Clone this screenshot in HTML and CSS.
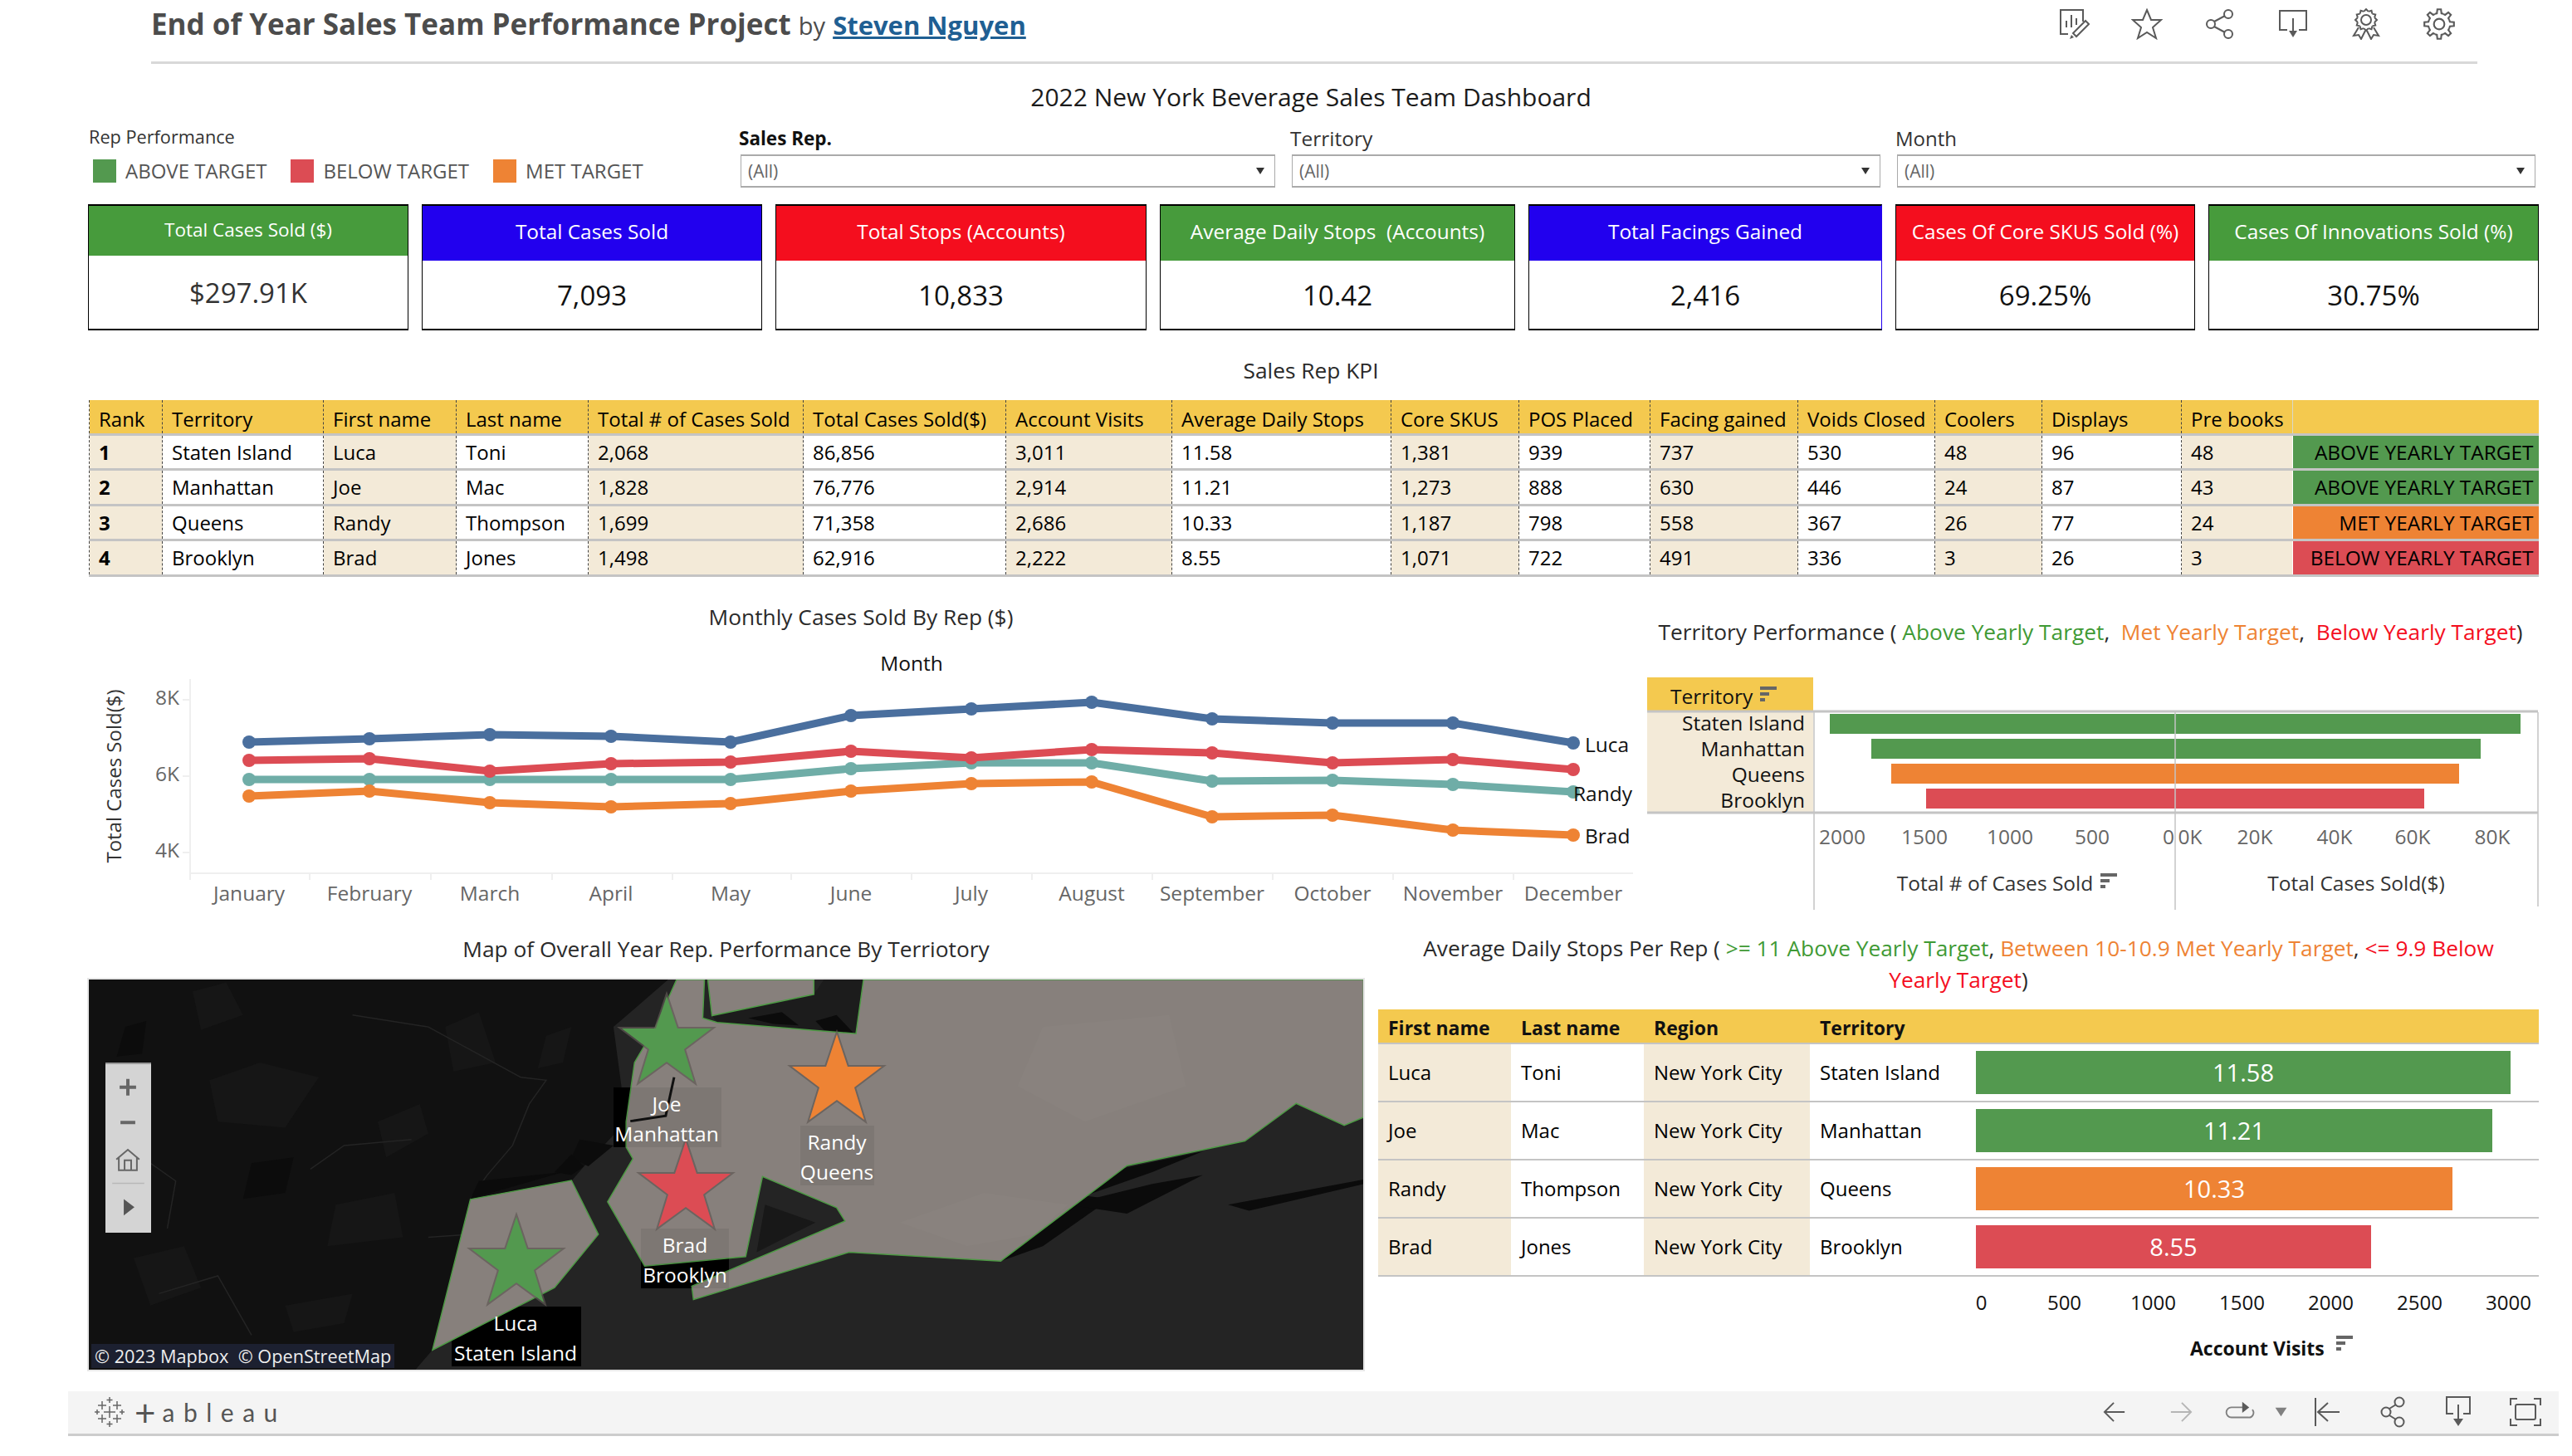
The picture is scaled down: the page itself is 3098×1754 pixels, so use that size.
FILE: index.html
```html
<!DOCTYPE html>
<html lang="en">
<head>
  <meta charset="UTF-8">
  <title>End of Year Sales Team Performance Project</title>
  <link rel="stylesheet" href="styles.css">
</head>
<body>
  <header class="topbar">
    <h1 class="project-title">End of Year Sales Team Performance Project <span class="by">by</span> <a class="author" href="#">Steven Nguyen</a></h1>
    <div class="top-icons">
      <svg class="icon" viewBox="0 0 38 38"><path d="M12 31H3V2h27v14M10 15v8M16 8v15M22 12v8"/><path d="M33 15l4 4-15 15-4-4z"/><path class="solid" d="M14 37l2-5 3 3z"/></svg>
      <svg class="icon" viewBox="0 0 38 38"><path d="M19 2l5 12h12l-10 9 4 13-11-7-11 7 4-13-10-9h12z"/></svg>
      <svg class="icon" viewBox="0 0 38 38"><circle cx="8" cy="19" r="5"/><circle cx="29" cy="7" r="5"/><circle cx="29" cy="31" r="5"/><path d="M12 16l13-7M12 22l13 7"/></svg>
      <svg class="icon" viewBox="0 0 38 38"><path d="M12 26H3V3h32v23h-9M19 12v16"/><path class="solid" d="M14 27h10l-5 8z"/></svg>
      <svg class="icon" viewBox="0 0 38 38"><circle cx="19" cy="14" r="6"/><path id="bump" d="M16.300 3.900L19 1L21.700 3.900"/><use href="#bump" transform="rotate(30 19 14)"/><use href="#bump" transform="rotate(60 19 14)"/><use href="#bump" transform="rotate(90 19 14)"/><use href="#bump" transform="rotate(120 19 14)"/><use href="#bump" transform="rotate(150 19 14)"/><use href="#bump" transform="rotate(180 19 14)"/><use href="#bump" transform="rotate(210 19 14)"/><use href="#bump" transform="rotate(240 19 14)"/><use href="#bump" transform="rotate(270 19 14)"/><use href="#bump" transform="rotate(300 19 14)"/><use href="#bump" transform="rotate(330 19 14)"/><path d="M10 23L4 33l6-1 3 5 5-10M28 23l6 10-6-1-3 5-5-10"/></svg>
      <svg class="icon" viewBox="0 0 36 36"><circle cx="18" cy="18" r="6"/><g id="gear"><path id="tooth" d="M13.22 6.45L15.4 5.77L15.93 1.13H20.07L20.6 5.77L22.78 6.45"/><use href="#tooth" transform="rotate(45 18 18)"/><use href="#tooth" transform="rotate(90 18 18)"/><use href="#tooth" transform="rotate(135 18 18)"/><use href="#tooth" transform="rotate(180 18 18)"/><use href="#tooth" transform="rotate(225 18 18)"/><use href="#tooth" transform="rotate(270 18 18)"/><use href="#tooth" transform="rotate(315 18 18)"/></g></svg>
    </div>
  </header>

  <h2 class="dash-title">2022 New York Beverage Sales Team Dashboard</h2>

  <section class="filters">
    <div class="legend">
      <div class="legend-title">Rep Performance</div>
      <div class="legend-items">
        <span class="swatch green"></span><span class="legend-text">ABOVE TARGET</span>
        <span class="swatch red"></span><span class="legend-text">BELOW TARGET</span>
        <span class="swatch orange"></span><span class="legend-text">MET TARGET</span>
      </div>
    </div>
    <div class="filter">
      <label class="filter-label strong">Sales Rep.</label>
      <div class="select">(All)<span class="caret"></span></div>
    </div>
    <div class="filter">
      <label class="filter-label medium">Territory</label>
      <div class="select">(All)<span class="caret"></span></div>
    </div>
    <div class="filter">
      <label class="filter-label">Month</label>
      <div class="select">(All)<span class="caret"></span></div>
    </div>
  </section>

  <section class="kpis">
    <div class="kpi"><div class="kpi-head short k-green">Total Cases Sold ($)</div><div class="kpi-val soft">$297.91K</div></div>
    <div class="kpi"><div class="kpi-head k-blue">Total Cases Sold</div><div class="kpi-val">7,093</div></div>
    <div class="kpi"><div class="kpi-head k-red">Total Stops (Accounts)</div><div class="kpi-val">10,833</div></div>
    <div class="kpi"><div class="kpi-head k-green">Average Daily Stops&nbsp; (Accounts)</div><div class="kpi-val">10.42</div></div>
    <div class="kpi kpi-edge"><div class="kpi-head k-blue">Total Facings Gained</div><div class="kpi-val">2,416</div></div>
    <div class="kpi"><div class="kpi-head k-red">Cases Of Core SKUS Sold (%)</div><div class="kpi-val">69.25%</div></div>
    <div class="kpi"><div class="kpi-head k-green">Cases Of Innovations Sold (%)</div><div class="kpi-val">30.75%</div></div>
  </section>

  <div class="section-title kpi-title">Sales Rep KPI</div>

  <table class="rep-table">
    <colgroup>
      <col class="c88"><col class="c194"><col class="c160"><col class="c159"><col class="c259"><col class="c244"><col class="c200"><col class="c264"><col class="c154"><col class="c158"><col class="c178"><col class="c165"><col class="c129"><col class="c168"><col class="c134"><col class="c296">
    </colgroup>
    <thead>
      <tr><th>Rank</th><th>Territory</th><th>First name</th><th>Last name</th><th>Total # of Cases Sold</th><th>Total Cases Sold($)</th><th>Account Visits</th><th>Average Daily Stops</th><th>Core SKUS</th><th>POS Placed</th><th>Facing gained</th><th>Voids Closed</th><th>Coolers</th><th>Displays</th><th>Pre books</th><th></th></tr>
    </thead>
    <tbody>
      <tr><td class="rank">1</td><td>Staten Island</td><td>Luca</td><td>Toni</td><td>2,068</td><td>86,856</td><td>3,011</td><td>11.58</td><td>1,381</td><td>939</td><td>737</td><td>530</td><td>48</td><td>96</td><td>48</td><td class="status st-green">ABOVE YEARLY TARGET</td></tr>
      <tr><td class="rank">2</td><td>Manhattan</td><td>Joe</td><td>Mac</td><td>1,828</td><td>76,776</td><td>2,914</td><td>11.21</td><td>1,273</td><td>888</td><td>630</td><td>446</td><td>24</td><td>87</td><td>43</td><td class="status st-green">ABOVE YEARLY TARGET</td></tr>
      <tr><td class="rank">3</td><td>Queens</td><td>Randy</td><td>Thompson</td><td>1,699</td><td>71,358</td><td>2,686</td><td>10.33</td><td>1,187</td><td>798</td><td>558</td><td>367</td><td>26</td><td>77</td><td>24</td><td class="status st-orange">MET YEARLY TARGET</td></tr>
      <tr><td class="rank">4</td><td>Brooklyn</td><td>Brad</td><td>Jones</td><td>1,498</td><td>62,916</td><td>2,222</td><td>8.55</td><td>1,071</td><td>722</td><td>491</td><td>336</td><td>3</td><td>26</td><td>3</td><td class="status st-red">BELOW YEARLY TARGET</td></tr>
    </tbody>
  </table>

  <section class="middle">
    <div class="line-panel">
      <div class="section-title">Monthly Cases Sold By Rep ($)</div>
      <svg class="line-chart" viewBox="107 780 1860 345">
        <text class="t-dark" x="1098" y="808" text-anchor="middle">Month</text>
        <path class="axis-line" d="M229 818V1060M229 1052H1968M373 1052v8M519 1052v8M665 1052v8M810 1052v8M953 1052v8M1098 1052v8M1243 1052v8M1388 1052v8M1533 1052v8M1678 1052v8M1823 1052v8M220 843h9M220 935h9M220 1027h9"/>
        <text class="t-axis" x="216" y="849" text-anchor="end">8K</text>
        <text class="t-axis" x="216" y="941" text-anchor="end">6K</text>
        <text class="t-axis" x="216" y="1033" text-anchor="end">4K</text>
        <text class="t-ytitle" transform="translate(146 935) rotate(-90)" text-anchor="middle">Total Cases Sold($)</text>

        <g class="series s-blue">
          <polyline points="300,894 445,890 590,885 736,887 880,894 1025,862 1170,854 1315,846 1460,866 1605,871 1750,871 1895,895"/>
          <circle cx="300" cy="894" r="8"/><circle cx="445" cy="890" r="8"/><circle cx="590" cy="885" r="8"/><circle cx="736" cy="887" r="8"/><circle cx="880" cy="894" r="8"/><circle cx="1025" cy="862" r="8"/><circle cx="1170" cy="854" r="8"/><circle cx="1315" cy="846" r="8"/><circle cx="1460" cy="866" r="8"/><circle cx="1605" cy="871" r="8"/><circle cx="1750" cy="871" r="8"/><circle cx="1895" cy="895" r="8"/>
        </g>
        <g class="series s-teal">
          <polyline points="300,939 445,939 590,939 736,939 880,939 1025,926 1170,919 1315,919 1460,941 1605,940 1750,945 1895,954"/>
          <circle cx="300" cy="939" r="8"/><circle cx="445" cy="939" r="8"/><circle cx="590" cy="939" r="8"/><circle cx="736" cy="939" r="8"/><circle cx="880" cy="939" r="8"/><circle cx="1025" cy="926" r="8"/><circle cx="1170" cy="919" r="8"/><circle cx="1315" cy="919" r="8"/><circle cx="1460" cy="941" r="8"/><circle cx="1605" cy="940" r="8"/><circle cx="1750" cy="945" r="8"/><circle cx="1895" cy="954" r="8"/>
        </g>
        <g class="series s-red">
          <polyline points="300,916 445,914 590,929 736,920 880,918 1025,905 1170,913 1315,903 1460,907 1605,919 1750,915 1895,927"/>
          <circle cx="300" cy="916" r="8"/><circle cx="445" cy="914" r="8"/><circle cx="590" cy="929" r="8"/><circle cx="736" cy="920" r="8"/><circle cx="880" cy="918" r="8"/><circle cx="1025" cy="905" r="8"/><circle cx="1170" cy="913" r="8"/><circle cx="1315" cy="903" r="8"/><circle cx="1460" cy="907" r="8"/><circle cx="1605" cy="919" r="8"/><circle cx="1750" cy="915" r="8"/><circle cx="1895" cy="927" r="8"/>
        </g>
        <g class="series s-orange">
          <polyline points="300,959 445,953 590,967 736,972 880,968 1025,953 1170,944 1315,942 1460,984 1605,982 1750,1000 1895,1006"/>
          <circle cx="300" cy="959" r="8"/><circle cx="445" cy="953" r="8"/><circle cx="590" cy="967" r="8"/><circle cx="736" cy="972" r="8"/><circle cx="880" cy="968" r="8"/><circle cx="1025" cy="953" r="8"/><circle cx="1170" cy="944" r="8"/><circle cx="1315" cy="942" r="8"/><circle cx="1460" cy="984" r="8"/><circle cx="1605" cy="982" r="8"/><circle cx="1750" cy="1000" r="8"/><circle cx="1895" cy="1006" r="8"/>
        </g>

        <text class="t-dark small" x="1909" y="906">Luca</text>
        <text class="t-dark small" x="1895" y="965">Randy</text>
        <text class="t-dark small" x="1909" y="1016">Brad</text>

        <text class="t-axis" x="300" y="1085" text-anchor="middle">January</text>
        <text class="t-axis" x="445" y="1085" text-anchor="middle">February</text>
        <text class="t-axis" x="590" y="1085" text-anchor="middle">March</text>
        <text class="t-axis" x="736" y="1085" text-anchor="middle">April</text>
        <text class="t-axis" x="880" y="1085" text-anchor="middle">May</text>
        <text class="t-axis" x="1025" y="1085" text-anchor="middle">June</text>
        <text class="t-axis" x="1170" y="1085" text-anchor="middle">July</text>
        <text class="t-axis" x="1315" y="1085" text-anchor="middle">August</text>
        <text class="t-axis" x="1460" y="1085" text-anchor="middle">September</text>
        <text class="t-axis" x="1605" y="1085" text-anchor="middle">October</text>
        <text class="t-axis" x="1750" y="1085" text-anchor="middle">November</text>
        <text class="t-axis" x="1895" y="1085" text-anchor="middle">December</text>
      </svg>
    </div>

    <div class="terr-panel">
      <div class="section-title terr-title">Territory Performance ( <span class="c-green">Above Yearly Target</span>,&nbsp; <span class="c-orange">Met Yearly Target</span>,&nbsp; <span class="c-red">Below Yearly Target</span>)</div>
      <svg class="terr-chart" viewBox="1984 790 1080 335">
        <rect class="fill-yellow" x="1984" y="816" width="200" height="40"/>
        <rect class="fill-beige" x="1984" y="858" width="200" height="120"/>
        <text class="t-dark" x="2012" y="848">Territory</text>
        <g class="sort-mark"><rect x="2120" y="827" width="20" height="4"/><rect x="2120" y="834" width="11" height="4"/><rect x="2120" y="841" width="6" height="4"/></g>

        <rect class="bar-green" x="2204" y="860" width="832" height="24"/>
        <rect class="bar-green" x="2254" y="890" width="734" height="24"/>
        <rect class="bar-orange" x="2278" y="920" width="684" height="24"/>
        <rect class="bar-red" x="2320" y="950" width="600" height="24"/>

        <path class="grid-line" d="M1984 857H3057M1984 979H3057"/>
        <path class="grid-thin" d="M2185 858V1096M2620 858V1096M3057 858V1092"/>

        <text class="t-dark right" x="2174" y="880">Staten Island</text>
        <text class="t-dark right" x="2174" y="911">Manhattan</text>
        <text class="t-dark right" x="2174" y="942">Queens</text>
        <text class="t-dark right" x="2174" y="973">Brooklyn</text>

        <text class="t-axis" x="2219" y="1017" text-anchor="middle">2000</text>
        <text class="t-axis" x="2318" y="1017" text-anchor="middle">1500</text>
        <text class="t-axis" x="2421" y="1017" text-anchor="middle">1000</text>
        <text class="t-axis" x="2520" y="1017" text-anchor="middle">500</text>
        <text class="t-axis" x="2612" y="1017" text-anchor="middle">0</text>
        <text class="t-axis" x="2638" y="1017" text-anchor="middle">0K</text>
        <text class="t-axis" x="2716" y="1017" text-anchor="middle">20K</text>
        <text class="t-axis" x="2812" y="1017" text-anchor="middle">40K</text>
        <text class="t-axis" x="2906" y="1017" text-anchor="middle">60K</text>
        <text class="t-axis" x="3002" y="1017" text-anchor="middle">80K</text>

        <text class="t-title" x="2403" y="1073" text-anchor="middle">Total # of Cases Sold</text>
        <g class="sort-mark"><rect x="2530" y="1052" width="20" height="4"/><rect x="2530" y="1059" width="11" height="4"/><rect x="2530" y="1066" width="6" height="4"/></g>
        <text class="t-title" x="2838" y="1073" text-anchor="middle">Total Cases Sold($)</text>
      </svg>
    </div>
  </section>

  <section class="bottom">
    <div class="map-panel">
      <div class="section-title map-title">Map of Overall Year Rep. Performance By Terriotory</div>
      <div class="map">
        <svg class="map-svg" viewBox="107 1180 1535 470">
          <rect class="water" x="107" y="1180" width="1535" height="470"/>
          <g transform="translate(90 1130) scale(1.014 .357)">
            <polygon class="land" points="17,140 705,140 640,300 655,620 605,770 590,820 470,880 425,1390 405,1456 17,1456"/>
            <polygon class="land-light" points="160,480 220,420 290,470 250,640 170,620"/>
            <polygon class="land-light" points="440,300 480,250 500,420 450,450"/>
            <polygon class="land-light" points="310,900 380,860 390,1010 300,1040"/>
            <polygon class="land-light" points="140,180 180,150 200,260 150,310"/>
            <polygon class="land-light" points="360,620 410,560 420,660 370,740"/>
            <polygon class="land-light" points="70,1080 130,1040 150,1180 90,1240"/>
            <polygon class="land-light" points="560,330 590,300 580,420 550,440"/>
            <polygon class="land-light" points="250,1240 330,1200 320,1300 260,1330"/>
            <polygon class="land-dark" points="60,300 85,280 80,390 50,400"/>
            <polygon class="land-dark" points="210,760 260,740 250,860 200,880"/>
            <polygon class="land-dark" points="600,680 640,700 610,770 590,740"/>
            <path class="river" d="M420,1010 L470,1000 M530,470 L560,480 L540,560 L520,700 L490,800 L470,880 M100,1200 L170,1140 L210,1340 M330,260 L420,300 L530,470 M280,780 L320,700 L400,680 M60,700 L120,820 L110,980"/>
            <polygon class="water-dark" points="878,190 890,140 937,140 928,323 763,285 757,262"/>
            <polygon class="speck" points="800,270 840,250 860,295 830,290"/>
            <polygon class="speck" points="880,280 905,260 925,320 890,310"/>
            <polygon class="speck" points="1240,780 1340,720 1280,790 1200,870"/>
            <polygon class="speck" points="1100,1090 1200,870 1230,880 1150,1040"/>
            <polygon class="speck" points="1180,900 1280,830 1340,800 1250,930"/>
            <polygon class="speck" points="1370,900 1531,815 1531,830 1395,920"/>
            <polygon class="speck-soft" points="820,900 880,960 810,1060"/>
            <polygon class="speck" points="480,820 580,790 470,880"/>
            <polygon class="speck" points="590,730 605,770 590,800 570,790"/>
          </g>

          <rect class="label-back" x="739" y="1310" width="130" height="72"/>
          <rect class="label-back" x="772" y="1480" width="106" height="72"/>
          <rect class="label-back" x="544" y="1574" width="156" height="72"/>

          <g transform="translate(90 1130) scale(1.014 .357)">
            <polygon class="land-gray" points="715,140 748,140 746,270 763,285 928,323 937,140 1531,140 1531,605 1508,632 1451,558 1390,685 1250,768 1100,1090 920,1060 735,1220 733,1175 915,955 905,910 817,805 797,1075 677,1107 633,890 663,745 655,705 655,620 665,420 690,300"/>
            <polygon class="land-gray" points="752,140 878,140 878,190 757,262"/>
            <polygon class="land-gray" points="470,882 590,818 622,1000 570,1180 425,1390"/>
            <polygon class="gray-light" points="1080,860 1180,900 1140,1000 1060,1040 980,960"/>
            <polygon class="gray-light" points="1150,300 1300,260 1320,500 1200,620 1120,500"/>
            <path class="river-black" d="M712,470 L702,600 L660,618"/>
          </g>

          <rect class="label-shade" x="739" y="1310" width="130" height="72"/>
          <rect class="label-shade" x="964" y="1356" width="89" height="72"/>
          <rect class="label-shade" x="772" y="1480" width="106" height="72"/>

          <polygon class="star bar-green" transform="translate(803 1257)" points="0,-57 13,-18 54,-18 21,7 33,46 0,22 -33,46 -21,7 -54,-18 -13,-18"/>
          <polygon class="star bar-orange" transform="translate(1008 1303)" points="0,-57 13,-18 54,-18 21,7 33,46 0,22 -33,46 -21,7 -54,-18 -13,-18"/>
          <polygon class="star bar-red" transform="translate(826 1432)" points="0,-57 13,-18 54,-18 21,7 33,46 0,22 -33,46 -21,7 -54,-18 -13,-18"/>
          <polygon class="star bar-green" transform="translate(622 1523)" points="0,-57 13,-18 54,-18 21,7 33,46 0,22 -33,46 -21,7 -54,-18 -13,-18"/>

          <text class="map-text" x="803" y="1339">Joe</text>
          <text class="map-text" x="803" y="1375">Manhattan</text>
          <text class="map-text" x="1008" y="1385">Randy</text>
          <text class="map-text" x="1008" y="1421">Queens</text>
          <text class="map-text" x="825" y="1509">Brad</text>
          <text class="map-text" x="825" y="1545">Brooklyn</text>
          <text class="map-text" x="621" y="1603">Luca</text>
          <text class="map-text" x="621" y="1639">Staten Island</text>
        </svg>

        <div class="map-tools">
          <svg viewBox="0 2 55 205">
            <path class="tool-bold" d="M27 20v20M17 30h20M18 73h18"/>
            <path class="tool-thin" d="M13 118l14-12 14 12M16 115v16h22v-16M23 131v-12h8v12"/>
            <path class="tool-rule" d="M8 147h39"/>
            <path class="tool-fill" d="M22 166l13 10-13 10z"/>
          </svg>
        </div>
        <div class="map-credit">© 2023 Mapbox&nbsp; © OpenStreetMap</div>
      </div>
    </div>

    <div class="stops-panel">
      <div class="section-title stops-title">Average Daily Stops Per Rep ( <span class="c-green">&gt;= 11 Above Yearly Target</span>, <span class="c-orange">Between 10-10.9 Met Yearly Target</span>, <span class="c-red">&lt;= 9.9 Below<br>Yearly Target</span>)</div>
      <div class="stops-head">
        <div>First name</div><div>Last name</div><div>Region</div><div>Territory</div><div></div>
      </div>
      <div class="stops-row">
        <div class="beige">Luca</div><div>Toni</div><div class="beige">New York City</div><div>Staten Island</div>
        <div class="bar-cell"><div class="stop-bar st-bar-green" style="width: 644px">11.58</div></div>
      </div>
      <div class="stops-row">
        <div class="beige">Joe</div><div>Mac</div><div class="beige">New York City</div><div>Manhattan</div>
        <div class="bar-cell"><div class="stop-bar st-bar-green" style="width: 622px">11.21</div></div>
      </div>
      <div class="stops-row">
        <div class="beige">Randy</div><div>Thompson</div><div class="beige">New York City</div><div>Queens</div>
        <div class="bar-cell"><div class="stop-bar st-bar-orange" style="width: 574px">10.33</div></div>
      </div>
      <div class="stops-row">
        <div class="beige">Brad</div><div>Jones</div><div class="beige">New York City</div><div>Brooklyn</div>
        <div class="bar-cell"><div class="stop-bar st-bar-red" style="width: 476px">8.55</div></div>
      </div>
      <div class="stops-axis">
        <span class="zero">0</span><span>500</span><span>1000</span><span>1500</span><span>2000</span><span>2500</span><span>3000</span>
      </div>
      <div class="stops-axis-title">Account Visits
        <svg class="sort-small" viewBox="0 0 20 20"><rect width="20" height="4"/><rect y="7" width="11" height="4"/><rect y="14" width="6" height="4"/></svg>
      </div>
    </div>
  </section>

  <footer class="footbar">
    <div class="brand">
      <svg class="brand-mark" viewBox="0 0 36 36">
        <path d="M18 11v14M11 18h14M9 5v10M4 10h10M27 5v10M22 10h10M9 21v10M4 26h10M27 21v10M22 26h10M18 0v7M14.5 3.500h7M18 29v7M14.500 32.500h7M3 15v6M0 18h6M33 15v6M30 18h6"/>
      </svg>
      <span class="brand-plus">+</span><span class="brand-word">ableau</span>
    </div>
    <div class="foot-icons">
      <svg class="fi fi-back" viewBox="0 0 30 30"><path d="M28 15H3M14 3L2 15l12 12"/></svg>
      <svg class="fi fi-off" viewBox="0 0 30 30"><path d="M2 15h25M16 3l12 12-12 12"/></svg>
      <svg class="fi fi-redo" viewBox="0 0 38 30"><path d="M23 9H8a6 6 0 0 0 0 13h22a6 6 0 0 0 5-10"/><path class="solid" d="M22 2l9 7-9 7z"/></svg>
      <svg class="fi fi-drop" viewBox="0 0 16 14"><path class="solid" d="M0 1h16l-8 12z"/></svg>
      <svg class="fi fi-first" viewBox="0 0 32 36"><path d="M2 1v34M31 18H6M17 7L5 18l12 11"/></svg>
      <svg class="fi fi-share" viewBox="0 0 30 38"><circle cx="7" cy="19" r="5.500"/><circle cx="23" cy="7" r="5.500"/><circle cx="23" cy="31" r="5.500"/><path d="M11 15l8-5M11 23l8 5"/></svg>
      <svg class="fi fi-down" viewBox="0 0 32 38"><path d="M10 21H2V1h28v20h-8M16 10v18"/><path class="solid" d="M10 27h12l-6 9z"/></svg>
      <svg class="fi fi-full" viewBox="0 0 38 34"><path d="M1 9V1h8M29 1h8v8M37 25v8h-8M9 33H1v-8"/><rect x="7" y="8" width="24" height="18" rx="2"/></svg>
    </div>
  </footer>
</body>
</html>
```

FILE: styles.css
```css
* {
  box-sizing: border-box;
}
html, body {
  margin: 0;
  padding: 0;
}
body {
  width: 3098px;
  height: 1754px;
  overflow: hidden;
  background: #fff;
  font-family: "Open Sans", Lato, sans-serif;
  color: #222;
  font-size: 24px;
}

/* top bar */
.topbar {
  display: flex;
  justify-content: space-between;
  align-items: center;
  height: 77px;
  margin-left: 182px;
  width: 2802px;
  padding-bottom: 17px;
  border-bottom: 3px solid #d8d8d8;
}
.project-title {
  margin: 0;
  font-size: 35px;
  font-weight: 700;
  color: #4c4c4c;
  white-space: nowrap;
}
.by {
  font-size: 29px;
  font-weight: 400;
}
.author {
  color: #1f5f93;
  font-size: 31px;
}
.top-icons {
  display: flex;
  gap: 50px;
  margin-right: 27px;
}
.icon {
  width: 38px;
  height: 38px;
  fill: none;
  stroke: #5a5a5a;
  stroke-width: 2;
}
.solid {
  fill: #5a5a5a;
  stroke: none;
}

.dash-title {
  margin: 0;
  height: 79px;
  line-height: 79px;
  text-align: center;
  font-size: 30px;
  font-weight: 500;
  color: #1b1b1b;
  padding-left: 60px;
}

/* filters and legend */
.filters {
  display: grid;
  grid-template-columns: 765px 644px 709px 769px;
  column-gap: 20px;
  padding-left: 107px;
  height: 70px;
}
.legend-title {
  font-size: 21.700px;
  height: 33px;
  line-height: 18px;
  color: #333;
}
.legend-items {
  display: flex;
  align-items: center;
  margin-left: 5px;
}
.swatch {
  width: 28px;
  height: 28px;
  margin-right: 11px;
}
.swatch.green { background: #53994f; }
.swatch.red { background: #dc4c54; }
.swatch.orange { background: #ee8334; }
.legend-text {
  font-size: 24px;
  color: #555;
  margin-right: 29px;
  white-space: nowrap;
}
.filter-label {
  display: block;
  height: 30px;
  line-height: 22px;
  margin-left: -2px;
  font-size: 24px;
  color: #333;
}
.filter-label.strong {
  font-size: 22.500px;
  font-weight: 700;
  color: #111;
}
.filter-label.medium {
  font-size: 24.500px;
  font-weight: 500;
}
.select {
  display: flex;
  justify-content: space-between;
  align-items: center;
  height: 40px;
  padding: 0 12px 0 8px;
  border: 1px solid #aaa;
  border-top-width: 2px;
  border-bottom-width: 2px;
  font-size: 21px;
  color: #666;
}
.caret {
  width: 0;
  height: 0;
  border-left: 5px solid transparent;
  border-right: 5px solid transparent;
  border-top: 8px solid #333;
}

/* kpi cards */
.kpis {
  display: grid;
  grid-template-columns: 386px 410px 447px 428px 426px 361px 398px;
  gap: 16px;
  margin: 20px 0 0 106px;
  width: 2952px;
}
.kpi {
  height: 152px;
  display: flex;
  flex-direction: column;
  border: 1px solid #000;
  border-top-width: 2px;
  border-bottom-width: 2px;
}
.kpi-edge {
  border-right-color: #2200ee;
}
.kpi-head {
  height: 66px;
  display: flex;
  align-items: center;
  justify-content: center;
  padding-bottom: 6px;
  color: #fff;
  font-size: 24.400px;
  font-weight: 500;
  white-space: nowrap;
}
.kpi-head.short {
  height: 60px;
  padding-bottom: 4px;
  font-size: 22.500px;
}
.k-green { background: #479b3c; }
.k-blue { background: #2200ee; }
.k-red { background: #f40e1e; }
.kpi-val {
  flex: 1;
  display: flex;
  align-items: center;
  justify-content: center;
  font-size: 33px;
  font-weight: 500;
  color: #111;
}
.kpi-val.soft {
  color: #333;
}

.section-title {
  text-align: center;
  font-size: 26.300px;
  line-height: 40px;
  color: #2a2a2a;
  white-space: nowrap;
}
.kpi-title {
  height: 84px;
  padding: 28px 0 0 60px;
}

/* rep table */
.rep-table {
  table-layout: fixed;
  width: 2950px;
  margin-left: 107px;
  border-collapse: collapse;
  font-size: 24px;
  color: #000;
}
.c88 { width: 88px; }
.c194 { width: 194px; }
.c160 { width: 160px; }
.c159 { width: 159px; }
.c259 { width: 259px; }
.c244 { width: 244px; }
.c200 { width: 200px; }
.c264 { width: 264px; }
.c154 { width: 154px; }
.c158 { width: 158px; }
.c178 { width: 178px; }
.c165 { width: 165px; }
.c129 { width: 129px; }
.c168 { width: 168px; }
.c134 { width: 134px; }
.c296 { width: 296px; }
.rep-table th {
  height: 41px;
  padding: 6px 0 0 11px;
  background: #f4c94f;
  font-weight: 400;
  text-align: left;
  white-space: nowrap;
  border-left: 1px dashed #444;
  border-bottom: 3px solid #c4c4c4;
}
.rep-table th:last-child {
  border-left: 1px solid #d8d8c8;
}
.rep-table td {
  height: 42.500px;
  padding: 0 0 0 11px;
  border-left: 1px dashed #444;
  border-bottom: 3px solid #c4c4c4;
  white-space: nowrap;
}
.rep-table td:nth-child(odd) {
  background: #f3ead8;
}
.rep-table .rank {
  font-weight: 700;
}
.rep-table .status {
  text-align: right;
  padding-right: 6px;
  border-left: 1px solid #fff;
  font-size: 24.400px;
}
.st-green { background: #53994f; }
.st-orange { background: #ee8334; }
.st-red { background: #dc4c54; }

/* middle row */
.middle {
  display: grid;
  grid-template-columns: 1860px 1080px;
  column-gap: 17px;
  margin-left: 107px;
  height: 430px;
}
.line-panel .section-title {
  padding-top: 28px;
  height: 85px;
}
.line-chart {
  display: block;
  width: 1860px;
  height: 345px;
}
.terr-title {
  padding: 46px 12px 0 0;
  height: 95px;
}
.terr-chart {
  display: block;
  width: 1080px;
  height: 335px;
}
.line-chart text, .terr-chart text {
  font-size: 24.500px;
}
.axis-line {
  fill: none;
  stroke: #efefef;
  stroke-width: 2;
}
.t-axis { fill: #666; }
.t-dark { fill: #111; }
.t-title { fill: #333; }
.right { text-anchor: end; }
.line-chart .t-ytitle {
  fill: #333;
  font-size: 24px;
}
.series polyline {
  fill: none;
  stroke-width: 9;
  stroke-linejoin: round;
}
.s-blue polyline { stroke: #4a6f9e; }
.s-blue circle { fill: #4a6f9e; }
.s-red polyline { stroke: #dc4c54; }
.s-red circle { fill: #dc4c54; }
.s-teal polyline { stroke: #6fada7; }
.s-teal circle { fill: #6fada7; }
.s-orange polyline { stroke: #ee8334; }
.s-orange circle { fill: #ee8334; }

.fill-yellow { fill: #f4c94f; }
.fill-beige { fill: #f3ead8; }
.bar-green { fill: #53994f; }
.bar-orange { fill: #ee8334; }
.bar-red { fill: #dc4c54; }
.grid-line {
  fill: none;
  stroke: #c4c4c4;
  stroke-width: 3;
}
.grid-thin {
  fill: none;
  stroke: #c4c4c4;
  stroke-width: 1.500;
}
.sort-mark rect { fill: #666; }
.c-green { color: #3f9a35; }
.c-orange { color: #ee8334; }
.c-red { color: #f40e1e; }

/* bottom row */
.bottom {
  display: grid;
  grid-template-columns: 1535px 1398px;
  column-gap: 18px;
  margin-left: 107px;
  height: 551px;
}
.map-title {
  height: 55px;
  line-height: 36px;
}
.map {
  position: relative;
  width: 1535px;
  height: 470px;
  outline: 2px solid #e6e6e6;
}
.map-svg {
  display: block;
  width: 1535px;
  height: 470px;
}
.water { fill: #242424; }
.land { fill: #111; }
.land-light { fill: #161616; }
.land-dark { fill: #0c0c0c; }
.water-dark { fill: #1c1c1c; }
.speck { fill: #0b0b0b; }
.speck-soft { fill: #181818; }
.river {
  fill: none;
  stroke: #242424;
  stroke-width: 1.500;
  vector-effect: non-scaling-stroke;
}
.river-black {
  fill: none;
  stroke: #111;
  stroke-width: 3;
  vector-effect: non-scaling-stroke;
}
.label-back { fill: #000; }
.label-shade { fill: rgba(0, 0, 0, .07); }
.land-gray {
  fill: #87807c;
  stroke: #4e9a45;
  stroke-width: 1.500;
  vector-effect: non-scaling-stroke;
}
.gray-light { fill: #89827e; }
.star {
  stroke: rgba(95, 88, 84, .7);
  stroke-width: 4;
  paint-order: stroke;
}
.map-text {
  fill: #fff;
  font-size: 24.500px;
  text-anchor: middle;
}
.map-tools {
  position: absolute;
  left: 20px;
  top: 100px;
  width: 55px;
  height: 205px;
  background: #d4d4d4;
  border-top: 2px solid #999;
}
.map-tools svg {
  display: block;
  width: 55px;
  height: 203px;
}
.tool-bold {
  fill: none;
  stroke: #666;
  stroke-width: 4;
}
.tool-thin {
  fill: none;
  stroke: #666;
  stroke-width: 2;
}
.tool-rule {
  stroke: #b8b8b8;
  stroke-width: 1.500;
}
.tool-fill { fill: #555; }
.map-credit {
  position: absolute;
  left: 3px;
  bottom: 2px;
  height: 29px;
  padding: 0 4px;
  line-height: 29px;
  font-size: 21.700px;
  color: #eee;
  background: #1c2030;
  white-space: nowrap;
}

.stops-title {
  margin-top: -2px;
  height: 93px;
  line-height: 38px;
}
.stops-head {
  display: grid;
  grid-template-columns: 160px 160px 200px 200px 1fr;
  height: 42px;
  padding-top: 4px;
  background: #f4c94f;
  border-bottom: 2px solid #c4c4c4;
  font-weight: 700;
  font-size: 23px;
  color: #111;
  align-items: center;
}
.stops-head div {
  padding-left: 12px;
}
.stops-row {
  display: grid;
  grid-template-columns: 160px 160px 200px 200px 1fr;
  height: 70px;
  border-bottom: 2px solid #c4c4c4;
  font-size: 24px;
  color: #000;
}
.stops-row > div {
  display: flex;
  align-items: center;
  padding-left: 12px;
}
.stops-row .beige {
  background: #f3ead8;
}
.stops-row .bar-cell {
  padding-left: 0;
}
.stop-bar {
  height: 52px;
  display: flex;
  align-items: center;
  justify-content: center;
  color: #fff;
  font-size: 29px;
  font-weight: 500;
}
.st-bar-green { background: #53994f; }
.st-bar-orange { background: #ee8334; }
.st-bar-red { background: #dc4c54; }
.stops-axis {
  display: flex;
  margin: 14px 0 0 666px;
  height: 32px;
  font-size: 24px;
  color: #111;
}
.stops-axis span {
  flex: 0 0 107px;
  text-align: center;
}
.stops-axis .zero {
  padding-left: 14px;
}
.stops-axis-title {
  display: flex;
  align-items: center;
  gap: 14px;
  margin: 24px 0 0 978px;
  font-size: 23px;
  font-weight: 700;
  color: #111;
}
.sort-small {
  width: 20px;
  height: 20px;
  fill: #666;
  margin-top: -10px;
}

/* footer */
.footbar {
  display: flex;
  justify-content: space-between;
  align-items: center;
  width: 3000px;
  height: 54px;
  margin-left: 82px;
  background: #f4f4f4;
  border-bottom: 3px solid #ccc;
}
.brand {
  display: flex;
  align-items: center;
  margin-left: 32px;
  color: #555;
}
.brand-mark {
  width: 36px;
  height: 36px;
  fill: none;
  stroke: #666;
  stroke-width: 1.500;
  margin-right: 12px;
}
.brand-plus {
  font-family: Lato, sans-serif;
  font-size: 44px;
  line-height: 40px;
  margin-right: 8px;
}
.brand-word {
  font-family: Lato, sans-serif;
  font-size: 30px;
  letter-spacing: 10.500px;
}
.foot-icons {
  display: flex;
  align-items: center;
  margin-right: 21px;
}
.fi {
  display: block;
  fill: none;
  stroke: #5a5a5a;
  stroke-width: 2;
}
.fi-back { width: 28px; height: 28px; margin-right: 52px; }
.fi-off { width: 28px; height: 28px; margin-right: 38px; stroke: #b5b5b5; }
.fi-redo { width: 38px; height: 28px; stroke: #808080; margin-right: 23px; }
.fi-drop { width: 15px; height: 12px; margin-right: 32px; }
.fi-drop .solid { fill: #808080; }
.fi-first { width: 32px; height: 36px; margin-right: 48px; }
.fi-share { width: 30px; height: 38px; margin-right: 48px; }
.fi-down { width: 32px; height: 38px; margin-right: 46px; }
.fi-full { width: 38px; height: 34px; }
```
